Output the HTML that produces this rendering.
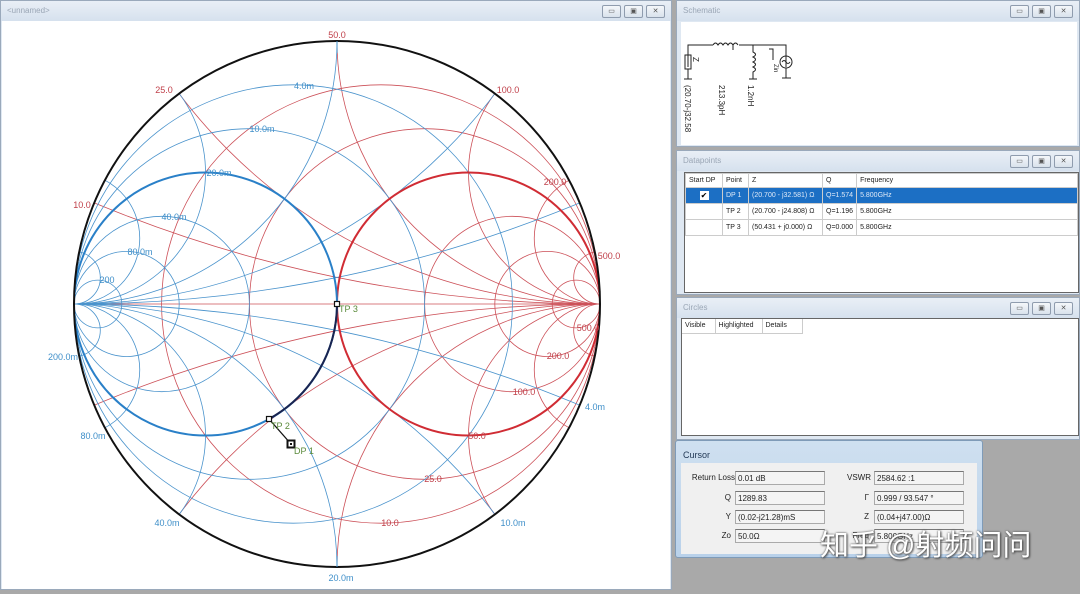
<!DOCTYPE html>
<html style="width:1080px;height:594px;overflow:hidden"><head><meta charset="utf-8">
<style>
*{margin:0;padding:0;box-sizing:border-box}
html,body{overflow:hidden}
body{width:1080px;height:594px;background:#a9a9a9;position:relative;overflow:hidden;font-family:"Liberation Sans",sans-serif;font-size:8px;color:#222}
.win{position:absolute;background:#dfe8f2;border:1px solid #9aa9bb}
.tb{position:absolute;left:0;right:0;top:0;height:20px;background:linear-gradient(#e9eff6,#d6e1ee);color:#9aa6b5;font-size:8px;padding:5px 6px}
.btns{position:absolute;right:6px;top:4px;display:flex;gap:3px}
.btns span{width:19px;height:13px;border:1px solid #8f9cae;border-radius:2px;background:linear-gradient(#f4f7fa,#d9e2ec);font-size:7px;text-align:center;line-height:11px;color:#555}
.white{position:absolute;background:#fff}
table{border-collapse:collapse;font-size:7px;width:100%}
td{border:1px solid #ccc;padding:2px 3px;height:16px;white-space:nowrap}
th{font-weight:normal;text-align:left;border:1px solid #ccc;padding:2px 3px;height:14px;background:#fff}
.sel td{background:#1c6fc4;color:#dfe9f7}
.lbl{position:absolute;font-size:8px;text-align:right}
.fld{position:absolute;height:14px;border:1px solid #aaa;border-top-color:#777;background:#f4f4f4;font-size:8px;padding:2px 2px;width:90px}
</style></head><body>

<div class="win" style="left:0;top:0;width:672px;height:590px">
<div class="tb">&lt;unnamed&gt;</div>
<div class="btns"><span>▭</span><span>▣</span><span>✕</span></div>
<div class="white" style="left:1px;top:20px;width:668px;height:568px;overflow:hidden">
<svg width="668" height="568" viewBox="1 20 668 568" style="position:absolute;left:0;top:0">
<defs><clipPath id="c"><circle cx="336" cy="303" r="263"/></clipPath></defs>
<g clip-path="url(#c)" fill="none" stroke-width="0.8">
<g stroke="#cc5058">
<circle cx="379.8" cy="303" r="219.2"/>
<circle cx="423.7" cy="303" r="175.3"/>
<circle cx="511.3" cy="303" r="87.7"/>
<circle cx="546.4" cy="303" r="52.6"/>
<circle cx="575.1" cy="303" r="23.9"/>
<circle cx="599" cy="-1012" r="1315"/><circle cx="599" cy="1618" r="1315"/>
<circle cx="599" cy="-223" r="526"/><circle cx="599" cy="829" r="526"/>
<circle cx="599" cy="40" r="263"/><circle cx="599" cy="566" r="263"/>
<circle cx="599" cy="171.5" r="131.5"/><circle cx="599" cy="434.5" r="131.5"/>
<circle cx="599" cy="237.25" r="65.75"/><circle cx="599" cy="368.75" r="65.75"/>
<circle cx="599" cy="276.7" r="26.3"/><circle cx="599" cy="329.3" r="26.3"/>
<line x1="73" y1="303" x2="599" y2="303"/>
</g>
<g stroke="#4a93cc">
<circle cx="292.2" cy="303" r="219.2"/>
<circle cx="248.3" cy="303" r="175.3"/>
<circle cx="160.7" cy="303" r="87.7"/>
<circle cx="125.6" cy="303" r="52.6"/>
<circle cx="96.9" cy="303" r="23.9"/>
<circle cx="73" cy="-1012" r="1315"/><circle cx="73" cy="1618" r="1315"/>
<circle cx="73" cy="-223" r="526"/><circle cx="73" cy="829" r="526"/>
<circle cx="73" cy="40" r="263"/><circle cx="73" cy="566" r="263"/>
<circle cx="73" cy="171.5" r="131.5"/><circle cx="73" cy="434.5" r="131.5"/>
<circle cx="73" cy="237.25" r="65.75"/><circle cx="73" cy="368.75" r="65.75"/>
<circle cx="73" cy="276.7" r="26.3"/><circle cx="73" cy="329.3" r="26.3"/>
</g>
<circle cx="467.5" cy="303" r="131.5" stroke="#d02c34" stroke-width="2"/>
<circle cx="204.5" cy="303" r="131.5" stroke="#2a80c8" stroke-width="2"/>
<path d="M268 418 A131.5 131.5 0 0 0 336 303" stroke="#1a2450" stroke-width="2"/>
</g>
<circle cx="336" cy="303" r="263" fill="none" stroke="#111" stroke-width="2"/>
<line x1="336" y1="40" x2="336" y2="52" stroke="#3f8fc9"/>
<line x1="336" y1="566" x2="336" y2="555" stroke="#3f8fc9"/>
<line x1="268" y1="418" x2="290" y2="443" stroke="#111" stroke-width="1.3"/>
<rect x="265.5" y="415.5" width="5" height="5" fill="#fff" stroke="#111" stroke-width="1.2"/>
<rect x="333.5" y="300.5" width="5" height="5" fill="#fff" stroke="#111" stroke-width="1.2"/>
<rect x="286.5" y="439.5" width="7" height="7" fill="#fff" stroke="#111" stroke-width="2"/>
<rect x="289" y="442" width="2" height="2" fill="#111"/>
<g font-family="Liberation Sans" font-size="9" fill="#5a8a3a">
<text x="338" y="311">TP 3</text><text x="270" y="428">TP 2</text><text x="293" y="453">DP 1</text>
</g>
<g font-family="Liberation Sans" font-size="9" fill="#c0404a" text-anchor="middle">
<text x="336" y="37">50.0</text><text x="163" y="92">25.0</text><text x="507" y="92">100.0</text>
<text x="81" y="207">10.0</text><text x="554" y="184">200.0</text><text x="608" y="258">500.0</text>
<text x="389" y="525">10.0</text><text x="432" y="481">25.0</text><text x="476" y="438">50.0</text>
<text x="523" y="394">100.0</text><text x="557" y="358">200.0</text><text x="587" y="330">500.0</text>
</g>
<g font-family="Liberation Sans" font-size="9" fill="#3f8fc9" text-anchor="middle">
<text x="303" y="88">4.0m</text><text x="261" y="131">10.0m</text><text x="218" y="175">20.0m</text>
<text x="173" y="219">40.0m</text><text x="139" y="254">80.0m</text><text x="106" y="282">200</text>
<text x="62" y="359">200.0m</text><text x="92" y="438">80.0m</text><text x="166" y="525">40.0m</text>
<text x="340" y="580">20.0m</text><text x="512" y="525">10.0m</text><text x="594" y="409">4.0m</text>
</g>
</svg>
</div>
</div>

<div class="win" style="left:676px;top:0;width:404px;height:147px">
<div class="tb">Schematic</div>
<div class="btns"><span>▭</span><span>▣</span><span>✕</span></div>
<div class="white" style="left:4px;top:21px;width:396px;height:123px">
<svg width="396" height="123" style="position:absolute;left:0;top:0" fill="none" stroke="#222" stroke-width="1">
<path d="M7 45 V23 H32 M58 23 H105 V45 M52 23 V28"/>
<path d="M32 23 q2.5 -4 5 0 q2.5 -4 5 0 q2.5 -4 5 0 q2.5 -4 5 0 q2.5 -4 5 0"/>
<rect x="4" y="33" width="6" height="14"/>
<path d="M7 47 V57 M3 57 H11"/>
<path d="M72 23 V30 q5 2.5 0 5 q5 2.5 0 5 q5 2.5 0 5 q5 2.5 0 5 V57 M68 57 H76"/>
<path d="M88 27 H92 V38"/>
<circle cx="105" cy="40" r="6"/><path d="M101 40 q2 -3 4 0 q2 3 4 0"/>
<path d="M105 46 V56 M101 56 H110"/>
<g font-family="Liberation Sans" font-size="8" fill="#222" stroke="none">
<text transform="translate(12,35) rotate(90)">Z</text>
<text transform="translate(93,42) rotate(90)" font-size="6">Zin</text>
<text transform="translate(4,63) rotate(90)">(20.70-j32.58</text>
<text transform="translate(38,63) rotate(90)">213.3pH</text>
<text transform="translate(67,63) rotate(90)">1.2nH</text>
</g>
</svg>
</div>
</div>

<div class="win" style="left:676px;top:150px;width:404px;height:145px">
<div class="tb">Datapoints</div>
<div class="btns"><span>▭</span><span>▣</span><span>✕</span></div>
<div class="white" style="left:7px;top:21px;width:395px;height:121px;border:1px solid #666">
<table>
<tr><th style="width:37px">Start DP</th><th style="width:26px">Point</th><th style="width:74px">Z</th><th style="width:34px">Q</th><th>Frequency</th></tr>
<tr class="sel"><td style="text-align:center"><span style="display:inline-block;width:9px;height:9px;background:#fff;color:#000;font-size:8px;line-height:9px">✔</span></td><td>DP 1</td><td>(20.700 - j32.581) Ω</td><td>Q=1.574</td><td>5.800GHz</td></tr>
<tr><td></td><td>TP 2</td><td>(20.700 - j24.808) Ω</td><td>Q=1.196</td><td>5.800GHz</td></tr>
<tr><td></td><td>TP 3</td><td>(50.431 + j0.000) Ω</td><td>Q=0.000</td><td>5.800GHz</td></tr>
</table>
</div>
</div>

<div class="win" style="left:676px;top:297px;width:404px;height:143px">
<div class="tb">Circles</div>
<div class="btns"><span>▭</span><span>▣</span><span>✕</span></div>
<div class="white" style="left:4px;top:20px;width:398px;height:118px;border:1px solid #666">
<table style="width:auto"><tr><th style="width:33px;border-top:0;border-left:0">Visible</th><th style="width:47px;border-top:0">Highlighted</th><th style="width:40px;border-top:0">Details</th></tr></table>
</div>
</div>

<div style="position:absolute;left:675px;top:440px;width:308px;height:118px;background:linear-gradient(#cfe0f0,#b9d1ea);border:1px solid #7f9bb8;border-radius:3px">
<div style="position:absolute;left:7px;top:9px;font-size:9px;color:#1e3552">Cursor</div>
<div style="position:absolute;left:5px;top:22px;width:296px;height:91px;background:#f0f0f0">
<div class="lbl" style="left:4px;top:10px;width:50px">Return Loss</div><div class="fld" style="left:54px;top:8px">0.01 dB</div>
<div class="lbl" style="left:4px;top:30px;width:46px">Q</div><div class="fld" style="left:54px;top:28px">1289.83</div>
<div class="lbl" style="left:4px;top:49px;width:46px">Y</div><div class="fld" style="left:54px;top:47px">(0.02-j21.28)mS</div>
<div class="lbl" style="left:4px;top:68px;width:46px">Zo</div><div class="fld" style="left:54px;top:66px">50.0Ω</div>
<div class="lbl" style="left:150px;top:10px;width:40px">VSWR</div><div class="fld" style="left:193px;top:8px">2584.62 :1</div>
<div class="lbl" style="left:150px;top:30px;width:38px">Γ</div><div class="fld" style="left:193px;top:28px">0.999 / 93.547 °</div>
<div class="lbl" style="left:150px;top:49px;width:38px">Z</div><div class="fld" style="left:193px;top:47px">(0.04+j47.00)Ω</div>
<div class="lbl" style="left:150px;top:68px;width:38px">Freq</div><div class="fld" style="left:193px;top:66px">5.800GHz</div>
</div>
</div>

<div style="position:absolute;left:820px;top:528px;height:40px;font-family:'Liberation Sans','Noto Sans CJK SC',sans-serif;font-size:29px;line-height:36px;color:#fff;text-shadow:0 0 2px #555,1px 1px 2px #444;white-space:nowrap">知乎 @射频问问</div>
</body></html>
